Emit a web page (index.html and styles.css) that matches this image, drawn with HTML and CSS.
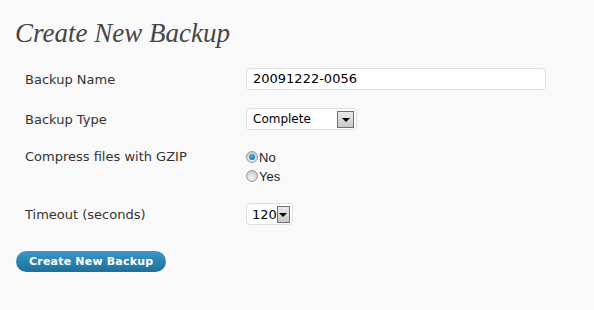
FILE: index.html
```html
<!DOCTYPE html>
<html>
<head>
<meta charset="utf-8">
<link rel="stylesheet" href="styles.css">
</head>
<body>
<div class="wrap">
  <h2 class="title">Create New Backup</h2>
  <form class="form">
    <div class="row row-name">
      <div class="label">Backup Name</div>
      <div class="field"><div class="text-input">20091222-0056</div></div>
    </div>
    <div class="row row-type">
      <div class="label">Backup Type</div>
      <div class="field">
        <div class="select select-type"><span class="select-text">Complete</span><span class="select-btn"><span class="tri"></span></span></div>
      </div>
    </div>
    <div class="row row-gzip">
      <div class="label">Compress files with GZIP</div>
      <div class="field radios">
        <div class="radio-line"><span class="radio checked"></span><span class="radio-label">No</span></div>
        <div class="radio-line"><span class="radio"></span><span class="radio-label">Yes</span></div>
      </div>
    </div>
    <div class="row row-timeout">
      <div class="label">Timeout (seconds)</div>
      <div class="field">
        <div class="select select-timeout"><span class="select-text">120</span><span class="select-btn"><span class="tri"></span></span></div>
      </div>
    </div>
    <div class="actions">
      <span class="button">Create New Backup</span>
    </div>
  </form>
</div>
</body>
</html>
```
FILE: styles.css
```css
html, body {
  margin: 0;
  padding: 0;
  background: #f9f9f9;
}
body {
  font-family: "DejaVu Sans", Verdana, sans-serif;
  font-size: 13px;
  color: #333;
}
.wrap {
  padding: 16px 0 0 15px;
}
.title {
  margin: 0;
  font-family: "Liberation Serif", Georgia, serif;
  font-style: italic;
  font-weight: normal;
  font-size: 27px;
  line-height: 34px;
  color: #464646;
}
.form {
  margin: 18px 0 0 10px;
}
.row {
  display: flex;
}
.label {
  width: 221px;
  flex: none;
}
.row-name, .row-type, .row-timeout {
  align-items: center;
  height: 22px;
}
.row-type { margin-top: 18px; }
.row-gzip { margin-top: 18px; }
.row-timeout { margin-top: 19px; }
.row-gzip .label { line-height: 17px; }
.text-input {
  box-sizing: border-box;
  width: 300px;
  height: 22px;
  border: 1px solid #dfdfdf;
  border-radius: 4px;
  background: #fff;
  color: #000;
  padding: 0 6px;
  line-height: 20px;
  font-size: 13px;
}
.select {
  box-sizing: border-box;
  height: 22px;
  border: 1px solid #dfdfdf;
  border-radius: 4px;
  background: #fff;
  display: flex;
  align-items: center;
  color: #000;
}
.select-type { width: 111px; padding-left: 6px; font-size: 12px; }
.select-timeout { width: 47px; padding-left: 5px; font-size: 13px; }
.select-text { flex: 1; }
.select-btn {
  box-sizing: border-box;
  width: 17px;
  height: 17px;
  margin-right: 2px;
  border: 1px solid #6f6f6f;
  background: linear-gradient(#e9e9e9, #c9c9c9);
  display: flex;
  align-items: center;
  justify-content: center;
}
.tri {
  width: 0;
  height: 0;
  border-left: 4px solid transparent;
  border-right: 4px solid transparent;
  border-top: 4px solid #000;
  margin-top: 2px;
}
.radios {
  display: flex;
  flex-direction: column;
  gap: 3px;
  padding-top: 1px;
}
.radio-line {
  display: flex;
  align-items: center;
  height: 16px;
  font-family: "Liberation Sans", Arial, sans-serif;
  font-size: 13px;
  color: #222;
}
.radio {
  box-sizing: border-box;
  width: 12px;
  height: 12px;
  border-radius: 50%;
  border: 1px solid #9a9a9a;
  background: radial-gradient(circle at 45% 70%, #f4f4f4 0%, #d8d8d8 55%, #b8b8b8 100%);
  margin-right: 1px;
  position: relative;
}
.radio.checked::after {
  content: "";
  position: absolute;
  left: 2px;
  top: 2px;
  width: 6px;
  height: 6px;
  border-radius: 50%;
  background: radial-gradient(circle at 40% 35%, #4cb0e8, #0b5e95);
}
.actions {
  margin-top: 26px;
  margin-left: -9px;
}
.button {
  display: inline-block;
  box-sizing: border-box;
  height: 21px;
  line-height: 21px;
  padding: 0 13px;
  border-radius: 11px;
  background: linear-gradient(#3a97c8, #1f6f98);
  color: #fff;
  font-weight: bold;
  font-size: 11px;
  letter-spacing: 0.2px;
}
```
